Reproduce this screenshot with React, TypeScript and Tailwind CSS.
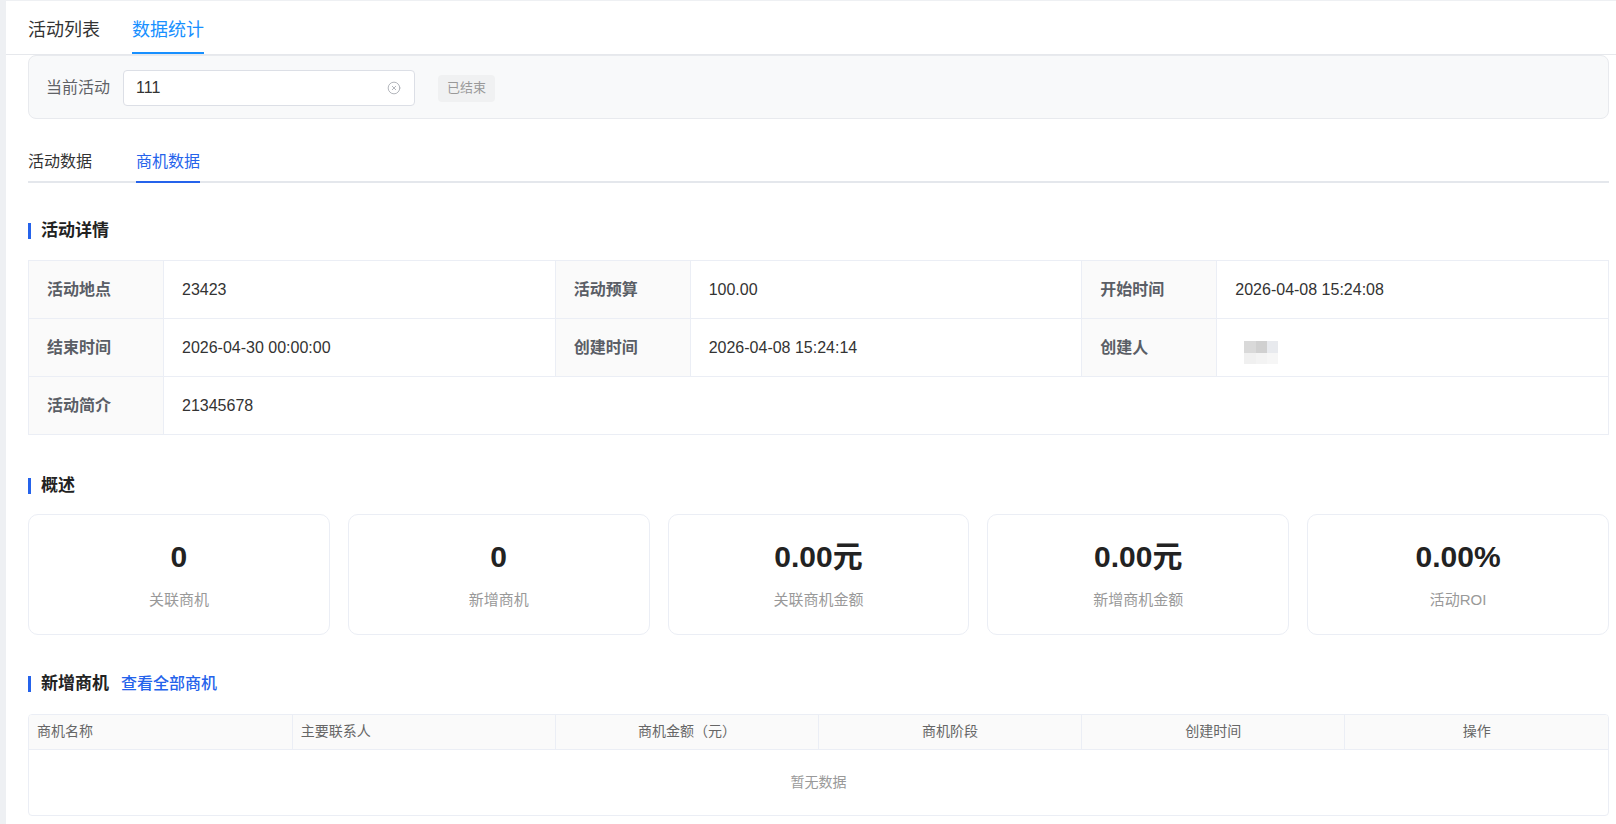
import { CircleX } from 'lucide-react'

const details: { label: string, value: React.ReactNode }[][] = [
  [
    { label: '活动地点', value: '23423' },
    { label: '活动预算', value: '100.00' },
    { label: '开始时间', value: '2026-04-08 15:24:08' },
  ],
  [
    { label: '结束时间', value: '2026-04-30 00:00:00' },
    { label: '创建时间', value: '2026-04-08 15:24:14' },
    { label: '创建人', value: <Mosaic /> },
  ],
]

const stats = [
  { value: '0', label: '关联商机' },
  { value: '0', label: '新增商机' },
  { value: '0.00元', label: '关联商机金额' },
  { value: '0.00元', label: '新增商机金额' },
  { value: '0.00%', label: '活动ROI' },
]

const columns = [
  { title: '商机名称', align: 'text-left' },
  { title: '主要联系人', align: 'text-left' },
  { title: '商机金额（元）', align: 'text-center' },
  { title: '商机阶段', align: 'text-center' },
  { title: '创建时间', align: 'text-center' },
  { title: '操作', align: 'text-center' },
]

// blurred creator name, as in the screenshot
function Mosaic() {
  return (
    <div className="grid grid-cols-3 w-[34px] ml-[9px] mt-[9px]">
      <span className="h-3 bg-[#d9d9d9]" />
      <span className="h-3 bg-[#d0d0d0]" />
      <span className="h-3 bg-[#e8eaee]" />
      <span className="h-[11px] bg-[#f0f0f0]" />
      <span className="h-[11px] bg-[#f3f3f3]" />
      <span className="h-[11px] bg-[#f6f6f6]" />
    </div>
  )
}

function SectionTitle({ children }: { children: React.ReactNode }) {
  return (
    <div className="flex items-center h-6">
      <span className="w-[3px] h-4 bg-[#2563eb] mr-[10px]" />
      {children}
    </div>
  )
}

export default function App() {
  return (
    <div className="min-h-screen bg-[#eef0f3] pt-px pl-[6px] font-['Liberation_Sans','Noto_Sans_CJK_SC',sans-serif] text-[#333]">
      <div className="bg-white min-h-[823px]">
        {/* top tabs */}
        <div className="flex gap-8 pl-[22px] border-b border-[#e6e8ec] h-[54px]">
          <div className="pt-4 pb-[9px] border-b-2 border-transparent text-[18px] leading-[26px] text-[#333]">活动列表</div>
          <div className="pt-4 pb-[9px] border-b-2 border-[#1890ff] text-[18px] leading-[26px] text-[#1890ff]">数据统计</div>
        </div>

        <div className="pl-[22px] pr-[7px]">
          {/* current activity */}
          <div className="h-16 flex items-center pt-[2px] px-[17px] bg-[#f8f9fa] border border-[#e8eaee] rounded-lg">
            <span className="text-[16px] text-[#606266] mr-[13px]">当前活动</span>
            <div className="w-[292px] h-9 bg-white border border-[#dcdfe6] rounded flex items-center pl-[12px] pr-[13px]">
              <span className="flex-1 text-[16px] text-[#333]">111</span>
              <CircleX size={14} strokeWidth={1.5} className="text-[#a8abb2]" />
            </div>
            <span className="ml-[23px] h-[27px] px-[9px] flex items-center bg-[#f0f1f2] rounded text-[13px] text-[#999]">已结束</span>
          </div>

          {/* sub tabs */}
          <div className="mt-[31px] flex gap-[44px] border-b-2 border-[#e4e7ec]">
            <div className="pb-[7px] -mb-[2px] border-b-2 border-transparent text-[16px] leading-6 text-[#333]">活动数据</div>
            <div className="pb-[7px] -mb-[2px] border-b-2 border-[#2563eb] text-[16px] leading-6 text-[#2563eb]">商机数据</div>
          </div>

          {/* details */}
          <div className="mt-[36px]">
            <SectionTitle><span className="text-[17px] font-bold text-[#222]">活动详情</span></SectionTitle>
          </div>
          <table className="mt-[17px] w-full table-fixed border-collapse text-[16px]">
            <colgroup>
              <col className="w-[135px]" />
              <col />
              <col className="w-[135px]" />
              <col />
              <col className="w-[135px]" />
              <col />
            </colgroup>
            <tbody>
              {details.map((row, i) => (
                <tr key={i} className="h-[58px]">
                  {row.map(c => (
                    <>
                      <td key={c.label + 'l'} className="border border-[#ebeef5] bg-[#fafafa] pl-[18px] font-semibold text-[#5a5e66]">{c.label}</td>
                      <td key={c.label + 'v'} className="border border-[#ebeef5] pl-[18px] text-[#333]">{c.value}</td>
                    </>
                  ))}
                </tr>
              ))}
              <tr className="h-[58px]">
                <td className="border border-[#ebeef5] bg-[#fafafa] pl-[18px] font-semibold text-[#5a5e66]">活动简介</td>
                <td colSpan={5} className="border border-[#ebeef5] pl-[18px] text-[#333]">21345678</td>
              </tr>
            </tbody>
          </table>

          {/* overview */}
          <div className="mt-[39px]">
            <SectionTitle><span className="text-[17px] font-bold text-[#222]">概述</span></SectionTitle>
          </div>
          <div className="mt-[16px] grid grid-cols-5 gap-[18px]">
            {stats.map(s => (
              <div key={s.label} className="h-[121px] border border-[#ebeef5] rounded-[10px] bg-white flex flex-col items-center pt-6">
                <div className="text-[30px] leading-9 font-bold text-[#222]">{s.value}</div>
                <div className="mt-[14px] text-[15px] leading-[22px] text-[#999]">{s.label}</div>
              </div>
            ))}
          </div>

          {/* new opportunities */}
          <div className="mt-[37px]">
            <SectionTitle>
              <span className="text-[17px] font-bold text-[#222]">新增商机</span>
              <span className="ml-3 text-[16px] font-medium text-[#2563eb]">查看全部商机</span>
            </SectionTitle>
          </div>
          <div className="mt-[18px] border border-[#ebeef5] rounded overflow-hidden">
            <table className="w-full table-fixed border-collapse">
              <thead>
                <tr className="h-[34px] bg-[#fafafa]">
                  {columns.map((c, i) => (
                    <th key={c.title} className={`${c.align} ${i > 0 ? 'border-l border-[#ebeef5]' : ''} border-b border-[#ebeef5] px-2 text-[14px] font-normal text-[#666]`}>{c.title}</th>
                  ))}
                </tr>
              </thead>
              <tbody>
                <tr className="h-[66px]">
                  <td colSpan={6} className="text-center text-[14px] text-[#999]">暂无数据</td>
                </tr>
              </tbody>
            </table>
          </div>
          <div className="h-8" />
        </div>
      </div>
    </div>
  )
}
